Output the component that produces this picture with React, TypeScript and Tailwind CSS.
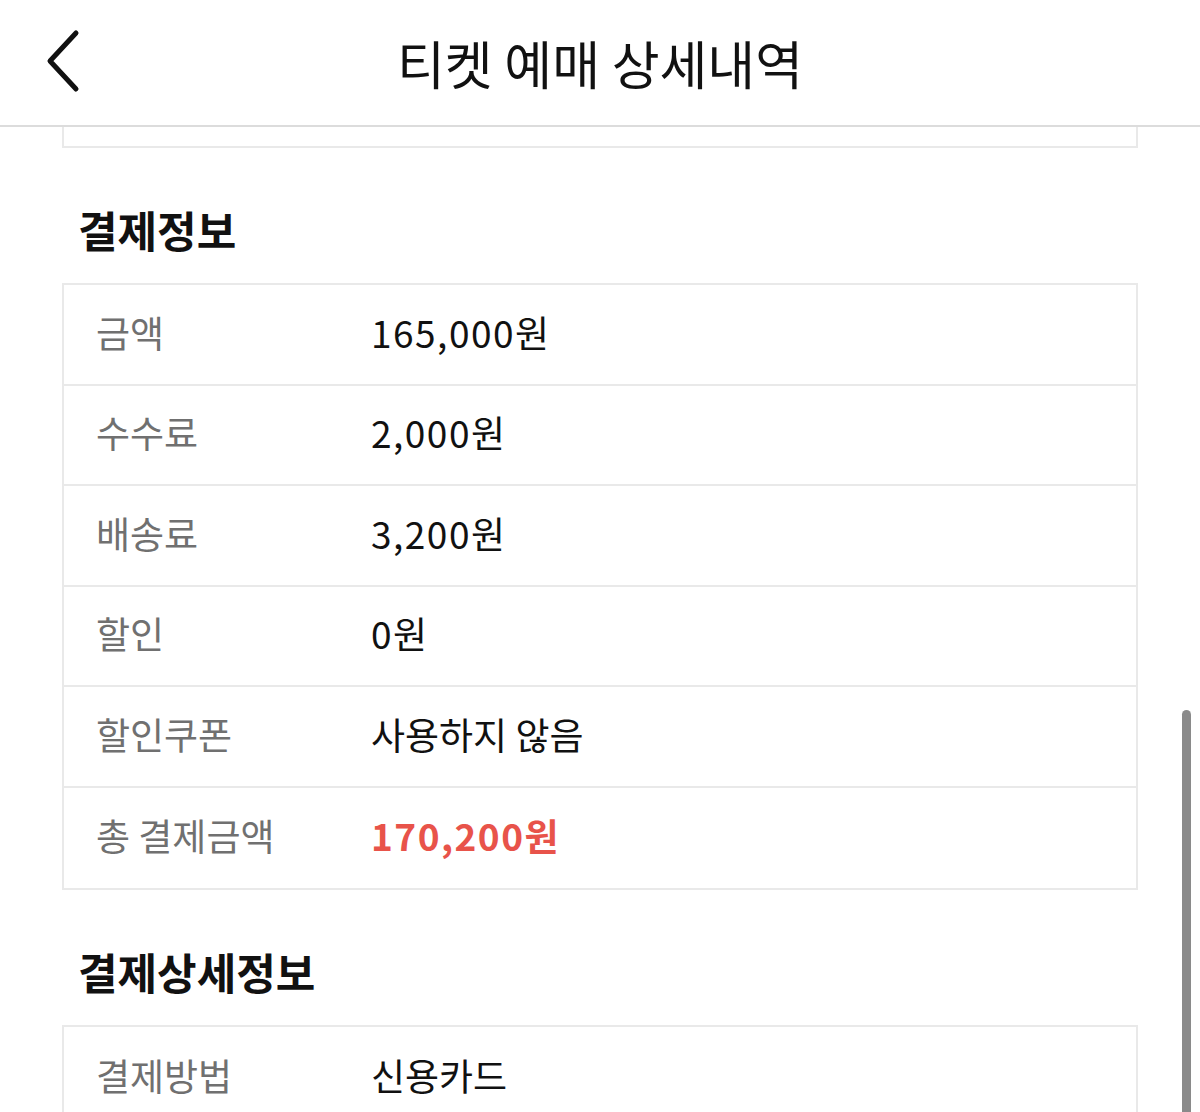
import React from "react";

// Ticket booking detail — payment info section (mobile view scaled up)

type Row = { label: string; value: string; highlight?: boolean };

const PAYMENT_ROWS: Row[] = [
  { label: "금액", value: "165,000원" },
  { label: "수수료", value: "2,000원" },
  { label: "배송료", value: "3,200원" },
  { label: "할인", value: "0원" },
  { label: "할인쿠폰", value: "사용하지 않음" },
  { label: "총 결제금액", value: "170,200원", highlight: true },
];

const DETAIL_ROWS: Row[] = [{ label: "결제방법", value: "신용카드" }];

function InfoTable({ rows }: { rows: Row[] }) {
  return (
    <div className="mx-[62px] border-2 border-[#e9e9e9] bg-white">
      {rows.map((r, i) => {
        const numeric = /\d/.test(r.value);
        return (
          <div
            key={r.label}
            className={`flex h-[100.5px] items-center pl-[32px] pb-[4px] ${i < rows.length - 1 ? "border-b-2 border-[#e9e9e9]" : ""}`}
          >
            <div className="w-[275px] text-[37px] text-[#707070]">{r.label}</div>
            <div
              className={`text-[37px] ${numeric ? "tracking-[1.5px]" : ""} ${
                r.highlight ? "font-bold text-[#e8534a]" : "text-[#111]"
              }`}
            >
              {r.value}
            </div>
          </div>
        );
      })}
    </div>
  );
}

function SectionTitle({ children }: { children: React.ReactNode }) {
  return (
    <h2 className="px-[78px] pt-[52px] pb-[25px] text-[43px] font-bold leading-[58px] text-[#111]">
      {children}
    </h2>
  );
}

export default function App() {
  return (
    <div
      className="relative h-[1112px] w-[1200px] overflow-hidden bg-white"
      style={{ fontFamily: '"Noto Sans CJK KR", "Noto Sans", sans-serif' }}
    >
      {/* header */}
      <header className="relative flex h-[127px] items-center justify-center border-b-2 border-[#dcdcdc] bg-white">
        <button className="absolute left-[46px] top-[28px]" aria-label="뒤로">
          <svg width="40" height="66" viewBox="0 0 40 66" fill="none">
            <path d="M30 5 L4 33 L30 61" stroke="#111" strokeWidth="5" strokeLinecap="round" strokeLinejoin="round" />
          </svg>
        </button>
        <h1 className="text-[52px] font-normal leading-none text-[#111]">티켓 예매 상세내역</h1>
      </header>

      {/* bottom of previous card */}
      <div className="mx-[62px] h-[21px] border-x-2 border-b-2 border-[#e9e9e9]" />

      <SectionTitle>결제정보</SectionTitle>
      <InfoTable rows={PAYMENT_ROWS} />

      <SectionTitle>결제상세정보</SectionTitle>
      <InfoTable rows={DETAIL_ROWS} />

      {/* scrollbar */}
      <div className="absolute left-[1182px] top-[710px] h-[440px] w-[9px] rounded-full bg-[#8a8a8a]" />
    </div>
  );
}
